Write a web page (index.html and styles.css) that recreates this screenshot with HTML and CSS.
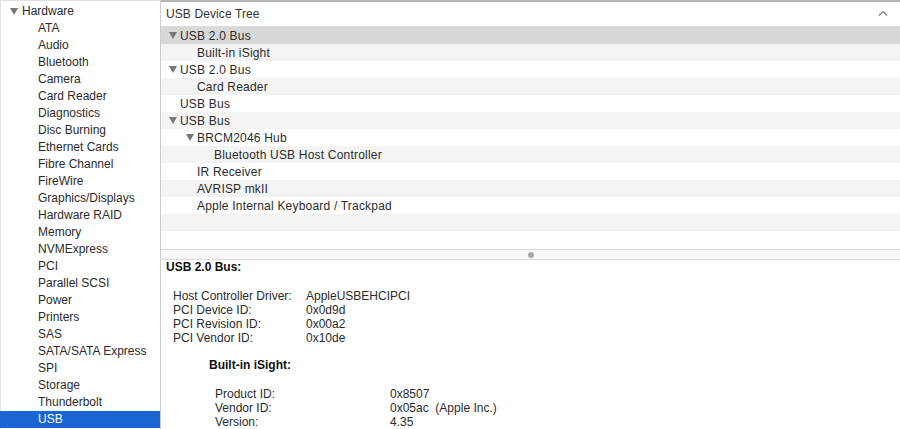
FILE: index.html
```html
<!DOCTYPE html>
<html lang="en">
<head>
    <meta charset="UTF-8">
    <title>System Information - USB</title>
    <link rel="stylesheet" href="styles.css">
</head>
<body>
    <div class="window">
        <div class="sidebar">
            <div class="side-row group"><span class="disclosure"></span>Hardware</div>
            <div class="side-row">ATA</div>
            <div class="side-row">Audio</div>
            <div class="side-row">Bluetooth</div>
            <div class="side-row">Camera</div>
            <div class="side-row">Card Reader</div>
            <div class="side-row">Diagnostics</div>
            <div class="side-row">Disc Burning</div>
            <div class="side-row">Ethernet Cards</div>
            <div class="side-row">Fibre Channel</div>
            <div class="side-row">FireWire</div>
            <div class="side-row">Graphics/Displays</div>
            <div class="side-row">Hardware RAID</div>
            <div class="side-row">Memory</div>
            <div class="side-row">NVMExpress</div>
            <div class="side-row">PCI</div>
            <div class="side-row">Parallel SCSI</div>
            <div class="side-row">Power</div>
            <div class="side-row">Printers</div>
            <div class="side-row">SAS</div>
            <div class="side-row">SATA/SATA Express</div>
            <div class="side-row">SPI</div>
            <div class="side-row">Storage</div>
            <div class="side-row">Thunderbolt</div>
            <div class="side-row selected">USB</div>
        </div>

        <div class="main">
            <div class="tree-header">
                <span>USB Device Tree</span>
                <svg class="chevron" width="10" height="6" viewBox="0 0 10 6">
                    <polyline points="1,5.5 5,1.5 9,5.5" fill="none" stroke="#8a8a8a" stroke-width="1.4"/>
                </svg>
            </div>

            <div class="tree">
                <div class="tree-row current lvl0"><span class="disclosure"></span>USB 2.0 Bus</div>
                <div class="tree-row lvl1">Built-in iSight</div>
                <div class="tree-row lvl0"><span class="disclosure"></span>USB 2.0 Bus</div>
                <div class="tree-row lvl1">Card Reader</div>
                <div class="tree-row lvl0">USB Bus</div>
                <div class="tree-row lvl0"><span class="disclosure"></span>USB Bus</div>
                <div class="tree-row lvl1"><span class="disclosure"></span>BRCM2046 Hub</div>
                <div class="tree-row lvl2">Bluetooth USB Host Controller</div>
                <div class="tree-row lvl1">IR Receiver</div>
                <div class="tree-row lvl1">AVRISP mkII</div>
                <div class="tree-row lvl1">Apple Internal Keyboard / Trackpad</div>
                <div class="tree-row"></div>
                <div class="tree-row"></div>
            </div>

            <div class="splitter"><span class="grip"></span></div>

            <div class="detail">
                <div class="detail-title">USB 2.0 Bus:</div>
                <div class="props bus-props">
                    <span>Host Controller Driver:</span><span>AppleUSBEHCIPCI</span>
                    <span>PCI Device ID:</span><span>0x0d9d</span>
                    <span>PCI Revision ID:</span><span>0x00a2</span>
                    <span>PCI Vendor ID:</span><span>0x10de</span>
                </div>

                <div class="detail-title sub">Built-in iSight:</div>
                <div class="props device-props">
                    <span>Product ID:</span><span>0x8507</span>
                    <span>Vendor ID:</span><span>0x05ac  (Apple Inc.)</span>
                    <span>Version:</span><span>4.35</span>
                </div>
            </div>
        </div>
    </div>
</body>
</html>
```

FILE: styles.css
```css
body, html {
    margin: 0;
    height: 100%;
    overflow: hidden;
    background: #fff;
}

.window {
    display: flex;
    height: 429px;
    font-family: "Liberation Sans", Arial, sans-serif;
    font-size: 12px;
    color: #2b2b2b;
}

/* left source list */
.sidebar {
    width: 161px;
    flex: none;
    padding-top: 2px;
    border-left: 1px solid #e4e4e4;
    border-right: 1px solid #cdcdcd;
    box-sizing: border-box;
    border-top: 1px solid #e0e0e0;
}

.side-row {
    height: 17px;
    line-height: 17px;
    padding-left: 37px;
    white-space: nowrap;
}

.side-row.group {
    padding-left: 9px;
    display: flex;
    align-items: center;
}

.side-row.selected {
    background: #1766d4;
    color: #fff;
    margin-left: -1px;
    padding-left: 38px;
}

.disclosure {
    display: inline-block;
    width: 0;
    height: 0;
    border-left: 4px solid transparent;
    border-right: 4px solid transparent;
    border-top: 7px solid #767676;
    margin-right: 4px;
}

/* right side */
.main {
    flex: 1;
    display: flex;
    flex-direction: column;
    border-top: 2px solid #b4b4b4;
}

.tree-header {
    height: 24px;
    flex: none;
    border-bottom: 1px solid #dedede;
    display: flex;
    align-items: center;
    justify-content: space-between;
    padding: 0 12px 0 5px;
    color: #333;
    letter-spacing: 0.1px;
}

.chevron {
    margin-top: -2px;
}

.tree {
    padding-bottom: 1px;
}

.tree-row {
    height: 17px;
    display: flex;
    align-items: center;
    white-space: nowrap;
    letter-spacing: 0.2px;
}

.tree-row:nth-child(even) {
    background: #f4f4f4;
}

.tree-row.current {
    background: #d8d8d8;
}

.lvl0 { padding-left: 19px; }
.lvl1 { padding-left: 36px; }
.lvl2 { padding-left: 53px; }

.tree-row .disclosure {
    margin-left: -11px;
    margin-right: 3px;
}

.splitter {
    height: 9px;
    flex: none;
    border-top: 1px solid #d9d9d9;
    border-bottom: 1px solid #d9d9d9;
    background: #f8f8f8;
    display: flex;
    align-items: center;
    justify-content: center;
}

.grip {
    width: 6px;
    height: 6px;
    border-radius: 50%;
    background: #ababab;
}

/* lower detail pane */
.detail {
    padding: 0 0 0 5px;
    line-height: 14px;
}

.detail-title {
    font-weight: bold;
    color: #111;
}

.detail-title.sub {
    margin: 13px 0 0 43px;
}

.props {
    display: grid;
    margin-top: 15px;
    white-space: pre;
}

.bus-props {
    grid-template-columns: 133px auto;
    margin-left: 7px;
}

.device-props {
    grid-template-columns: 175px auto;
    margin-left: 49px;
}
```
